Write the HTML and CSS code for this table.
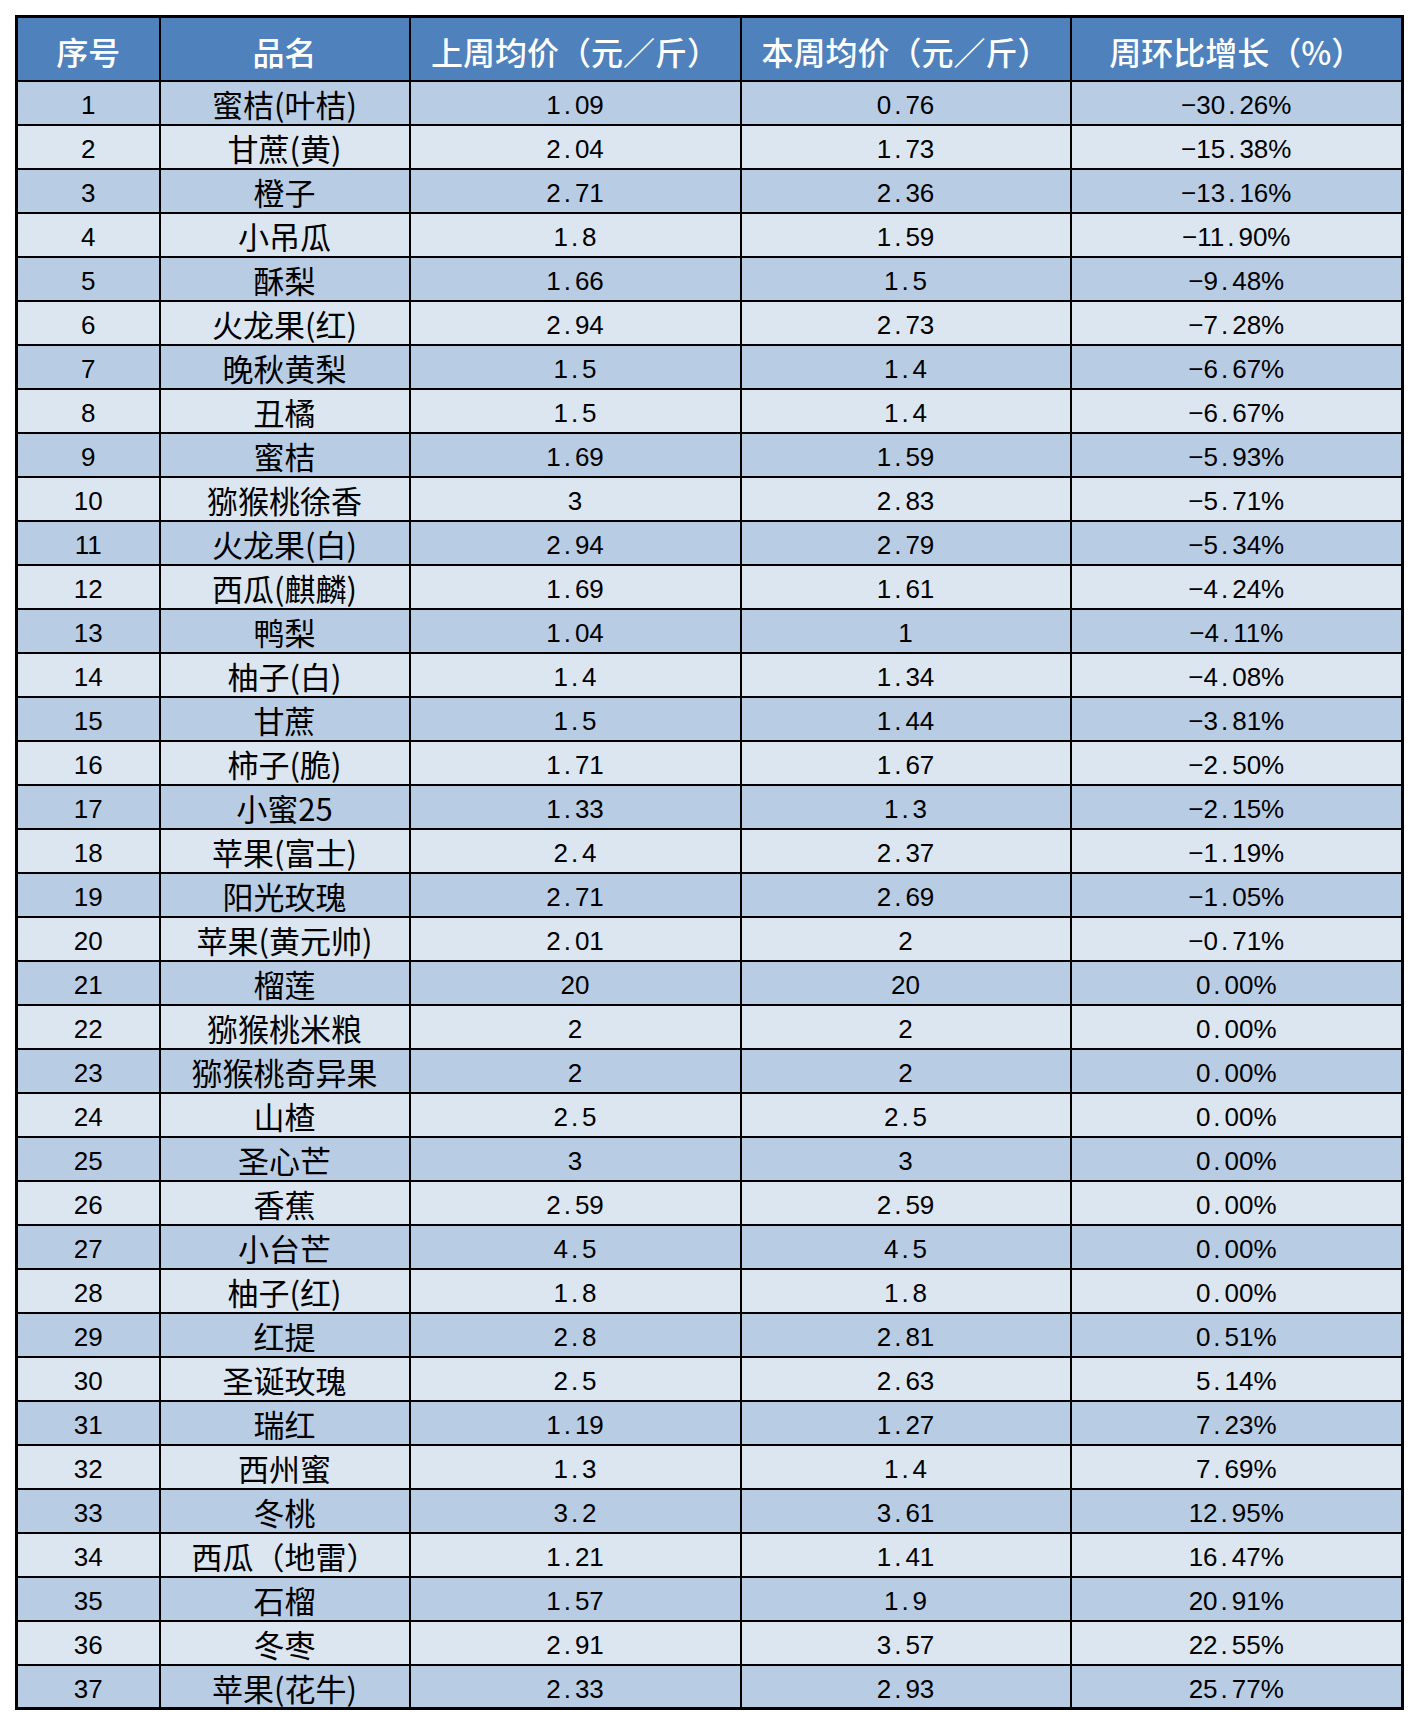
FILE: index.html
```html
<!DOCTYPE html>
<html lang="zh-CN">
<head>
<meta charset="utf-8">
<title>水果周均价</title>
<link rel="stylesheet" href="styles.css">
</head>
<body>
<div class="page">
<table class="prices">
<colgroup>
<col class="c-no"><col class="c-name"><col class="c-last"><col class="c-this"><col class="c-chg">
</colgroup>
<thead>
<tr><th>序号</th><th>品名</th><th>上周均价（元／斤）</th><th>本周均价（元／斤）</th><th>周环比增长（%）</th></tr>
</thead>
<tbody>
<tr><td>1</td><td class="name">蜜桔(叶桔)</td><td>1<span class="dp">.</span>09</td><td>0<span class="dp">.</span>76</td><td>−30<span class="dp">.</span>26%</td></tr>
<tr><td>2</td><td class="name">甘蔗(黄)</td><td>2<span class="dp">.</span>04</td><td>1<span class="dp">.</span>73</td><td>−15<span class="dp">.</span>38%</td></tr>
<tr><td>3</td><td class="name">橙子</td><td>2<span class="dp">.</span>71</td><td>2<span class="dp">.</span>36</td><td>−13<span class="dp">.</span>16%</td></tr>
<tr><td>4</td><td class="name">小吊瓜</td><td>1<span class="dp">.</span>8</td><td>1<span class="dp">.</span>59</td><td>−11<span class="dp">.</span>90%</td></tr>
<tr><td>5</td><td class="name">酥梨</td><td>1<span class="dp">.</span>66</td><td>1<span class="dp">.</span>5</td><td>−9<span class="dp">.</span>48%</td></tr>
<tr><td>6</td><td class="name">火龙果(红)</td><td>2<span class="dp">.</span>94</td><td>2<span class="dp">.</span>73</td><td>−7<span class="dp">.</span>28%</td></tr>
<tr><td>7</td><td class="name">晚秋黄梨</td><td>1<span class="dp">.</span>5</td><td>1<span class="dp">.</span>4</td><td>−6<span class="dp">.</span>67%</td></tr>
<tr><td>8</td><td class="name">丑橘</td><td>1<span class="dp">.</span>5</td><td>1<span class="dp">.</span>4</td><td>−6<span class="dp">.</span>67%</td></tr>
<tr><td>9</td><td class="name">蜜桔</td><td>1<span class="dp">.</span>69</td><td>1<span class="dp">.</span>59</td><td>−5<span class="dp">.</span>93%</td></tr>
<tr><td>10</td><td class="name">猕猴桃徐香</td><td>3</td><td>2<span class="dp">.</span>83</td><td>−5<span class="dp">.</span>71%</td></tr>
<tr><td>11</td><td class="name">火龙果(白)</td><td>2<span class="dp">.</span>94</td><td>2<span class="dp">.</span>79</td><td>−5<span class="dp">.</span>34%</td></tr>
<tr><td>12</td><td class="name">西瓜(麒麟)</td><td>1<span class="dp">.</span>69</td><td>1<span class="dp">.</span>61</td><td>−4<span class="dp">.</span>24%</td></tr>
<tr><td>13</td><td class="name">鸭梨</td><td>1<span class="dp">.</span>04</td><td>1</td><td>−4<span class="dp">.</span>11%</td></tr>
<tr><td>14</td><td class="name">柚子(白)</td><td>1<span class="dp">.</span>4</td><td>1<span class="dp">.</span>34</td><td>−4<span class="dp">.</span>08%</td></tr>
<tr><td>15</td><td class="name">甘蔗</td><td>1<span class="dp">.</span>5</td><td>1<span class="dp">.</span>44</td><td>−3<span class="dp">.</span>81%</td></tr>
<tr><td>16</td><td class="name">柿子(脆)</td><td>1<span class="dp">.</span>71</td><td>1<span class="dp">.</span>67</td><td>−2<span class="dp">.</span>50%</td></tr>
<tr><td>17</td><td class="name">小蜜25</td><td>1<span class="dp">.</span>33</td><td>1<span class="dp">.</span>3</td><td>−2<span class="dp">.</span>15%</td></tr>
<tr><td>18</td><td class="name">苹果(富士)</td><td>2<span class="dp">.</span>4</td><td>2<span class="dp">.</span>37</td><td>−1<span class="dp">.</span>19%</td></tr>
<tr><td>19</td><td class="name">阳光玫瑰</td><td>2<span class="dp">.</span>71</td><td>2<span class="dp">.</span>69</td><td>−1<span class="dp">.</span>05%</td></tr>
<tr><td>20</td><td class="name">苹果(黄元帅)</td><td>2<span class="dp">.</span>01</td><td>2</td><td>−0<span class="dp">.</span>71%</td></tr>
<tr><td>21</td><td class="name">榴莲</td><td>20</td><td>20</td><td>0<span class="dp">.</span>00%</td></tr>
<tr><td>22</td><td class="name">猕猴桃米粮</td><td>2</td><td>2</td><td>0<span class="dp">.</span>00%</td></tr>
<tr><td>23</td><td class="name">猕猴桃奇异果</td><td>2</td><td>2</td><td>0<span class="dp">.</span>00%</td></tr>
<tr><td>24</td><td class="name">山楂</td><td>2<span class="dp">.</span>5</td><td>2<span class="dp">.</span>5</td><td>0<span class="dp">.</span>00%</td></tr>
<tr><td>25</td><td class="name">圣心芒</td><td>3</td><td>3</td><td>0<span class="dp">.</span>00%</td></tr>
<tr><td>26</td><td class="name">香蕉</td><td>2<span class="dp">.</span>59</td><td>2<span class="dp">.</span>59</td><td>0<span class="dp">.</span>00%</td></tr>
<tr><td>27</td><td class="name">小台芒</td><td>4<span class="dp">.</span>5</td><td>4<span class="dp">.</span>5</td><td>0<span class="dp">.</span>00%</td></tr>
<tr><td>28</td><td class="name">柚子(红)</td><td>1<span class="dp">.</span>8</td><td>1<span class="dp">.</span>8</td><td>0<span class="dp">.</span>00%</td></tr>
<tr><td>29</td><td class="name">红提</td><td>2<span class="dp">.</span>8</td><td>2<span class="dp">.</span>81</td><td>0<span class="dp">.</span>51%</td></tr>
<tr><td>30</td><td class="name">圣诞玫瑰</td><td>2<span class="dp">.</span>5</td><td>2<span class="dp">.</span>63</td><td>5<span class="dp">.</span>14%</td></tr>
<tr><td>31</td><td class="name">瑞红</td><td>1<span class="dp">.</span>19</td><td>1<span class="dp">.</span>27</td><td>7<span class="dp">.</span>23%</td></tr>
<tr><td>32</td><td class="name">西州蜜</td><td>1<span class="dp">.</span>3</td><td>1<span class="dp">.</span>4</td><td>7<span class="dp">.</span>69%</td></tr>
<tr><td>33</td><td class="name">冬桃</td><td>3<span class="dp">.</span>2</td><td>3<span class="dp">.</span>61</td><td>12<span class="dp">.</span>95%</td></tr>
<tr><td>34</td><td class="name">西瓜（地雷）</td><td>1<span class="dp">.</span>21</td><td>1<span class="dp">.</span>41</td><td>16<span class="dp">.</span>47%</td></tr>
<tr><td>35</td><td class="name">石榴</td><td>1<span class="dp">.</span>57</td><td>1<span class="dp">.</span>9</td><td>20<span class="dp">.</span>91%</td></tr>
<tr><td>36</td><td class="name">冬枣</td><td>2<span class="dp">.</span>91</td><td>3<span class="dp">.</span>57</td><td>22<span class="dp">.</span>55%</td></tr>
<tr><td>37</td><td class="name">苹果(花牛)</td><td>2<span class="dp">.</span>33</td><td>2<span class="dp">.</span>93</td><td>25<span class="dp">.</span>77%</td></tr>
</tbody>
</table>
</div>
</body>
</html>
```
FILE: styles.css
```css
html, body {
  margin: 0;
  padding: 0;
  background: #ffffff;
}

.page {
  padding: 15px;
}

.prices {
  border-collapse: collapse;
  table-layout: fixed;
  width: 1386px;
  border: 3px solid #000000;
}

.c-no { width: 143px; }
.c-name { width: 250px; }
.c-last { width: 331px; }
.c-this { width: 330px; }
.c-chg { width: 332px; }

.prices th,
.prices td {
  border: 2px solid #000000;
  padding: 0;
  text-align: center;
  vertical-align: middle;
  white-space: nowrap;
  overflow: hidden;
}

.prices th {
  height: 64px;
  background: #4f81bd;
  color: #ffffff;
  font-family: "Noto Sans CJK SC", sans-serif;
  font-size: 32px;
  font-weight: 500;
  line-height: 40px;
  padding-top: 4px;
  box-sizing: border-box;
}

.prices td {
  height: 44px;
  box-sizing: border-box;
  color: #000000;
  font-family: "Liberation Sans", "Noto Sans CJK SC", sans-serif;
  font-size: 26px;
  line-height: 30px;
  padding-top: 5px;
}

.prices td.name {
  font-family: "Noto Sans CJK SC", sans-serif;
  font-size: 31px;
  padding-top: 3px;
}

.prices tbody tr:nth-child(odd) td {
  background: #b8cce4;
}

.prices tbody tr:nth-child(even) td {
  background: #dce6f1;
}

.dp {
  padding-left: 3px;
  padding-right: 4px;
}
```
